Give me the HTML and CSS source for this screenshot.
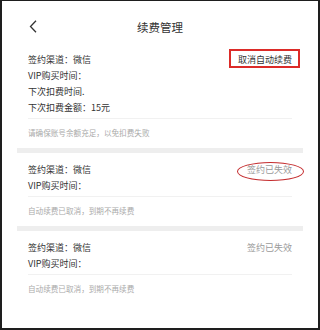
FILE: index.html
```html
<!DOCTYPE html>
<html lang="zh-CN">
<head>
<meta charset="utf-8">
<title>续费管理</title>
<link rel="stylesheet" href="styles.css">
</head>
<body>
<div class="frame">
  <header class="header">
    <div class="back">
      <svg width="9" height="13" viewBox="0 0 9 13"><polyline points="7,0.8 1.5,6.5 7,12.2" fill="none" stroke="#333" stroke-width="1.3"/></svg>
    </div>
    <div class="title">续费管理</div>
    <div></div>
  </header>
  <section class="card first">
    <div class="row"><span>签约渠道：微信</span><span class="action boxed">取消自动续费</span></div>
    <div class="row"><span>VIP购买时间：</span></div>
    <div class="row"><span>下次扣费时间.</span></div>
    <div class="row"><span>下次扣费金额：15元</span></div>
    <div class="divider"></div>
    <div class="note">请确保账号余额充足，以免扣费失败</div>
  </section>
  <section class="card">
    <div class="row"><span>签约渠道：微信</span><span class="status circled">签约已失效</span></div>
    <div class="row"><span>VIP购买时间：</span></div>
    <div class="divider"></div>
    <div class="note">自动续费已取消，到期不再续费</div>
  </section>
  <section class="card">
    <div class="row"><span>签约渠道：微信</span><span class="status">签约已失效</span></div>
    <div class="row"><span>VIP购买时间：</span></div>
    <div class="divider"></div>
    <div class="note">自动续费已取消，到期不再续费</div>
  </section>
</div>
</body>
</html>
```
FILE: styles.css
```css
html, body {
  margin: 0;
  padding: 0;
  background: #fff;
}
.frame {
  box-sizing: border-box;
  width: 320px;
  height: 330px;
  border-style: solid;
  border-color: #1e1e1e;
  border-width: 1px 2px 2px 2px;
  background: #fff;
  overflow: hidden;
  font-family: "Noto Sans CJK SC", "Noto Sans", sans-serif;
  color: #333;
}
.header {
  height: 51px;
  display: grid;
  grid-template-columns: 1fr auto 1fr;
  align-items: center;
}
.back {
  padding-left: 27px;
  display: flex;
  align-items: center;
}
.back svg { display: block; }
.title {
  font-size: 11.5px;
  line-height: 16px;
  color: #333;
}
.card {
  margin: 0 15px;
  padding: 9px 11px 7px;
  border-top: 5px solid #eeeeee;
}
.card.first {
  border-top: 0;
  padding-top: 0;
}
.row {
  display: flex;
  justify-content: space-between;
  font-size: 9px;
  line-height: 16px;
  height: 16px;
}
.action { position: relative; color: #333; }
.status { position: relative; color: #9a9a9a; }
.boxed::before {
  content: "";
  position: absolute;
  left: -9px;
  right: -8px;
  top: -3px;
  bottom: 0;
  border-width: 2px;
  border-style: solid;
  border-color: #dc2b28;
}
.circled::after {
  content: "";
  position: absolute;
  left: -10px;
  right: -12px;
  top: 0;
  bottom: -3px;
  border: 1.5px solid #c42b2d;
  border-radius: 50%;
}
.divider {
  height: 1px;
  background: #f1f1f1;
  margin-top: 2px;
}
.note {
  padding-top: 6px;
  font-size: 7.6px;
  line-height: 16px;
  color: #aaaaaa;
}
```
